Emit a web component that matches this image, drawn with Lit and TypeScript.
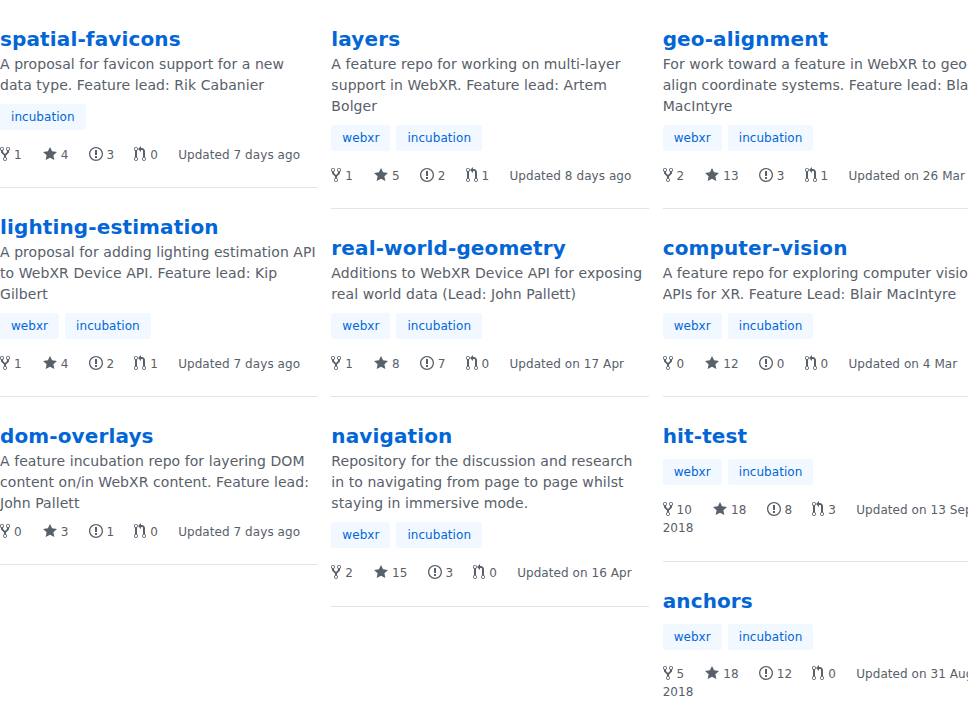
import { LitElement, css, html, svg } from 'lit';
import { customElement } from 'lit/decorators.js';

interface Repo {
  name: string;
  desc?: string;
  topics: string[];
  forks: number;
  stars: number;
  issues: number;
  prs: number;
  updated: string;
}

const W = ['webxr', 'incubation'];

const COLUMNS: Repo[][] = [
  [
    { name: 'spatial-favicons', desc: 'A proposal for favicon support for a new data type. Feature lead: Rik Cabanier', topics: ['incubation'], forks: 1, stars: 4, issues: 3, prs: 0, updated: 'Updated 7 days ago' },
    { name: 'lighting-estimation', desc: 'A proposal for adding lighting estimation API to WebXR Device API. Feature lead: Kip Gilbert', topics: W, forks: 1, stars: 4, issues: 2, prs: 1, updated: 'Updated 7 days ago' },
    { name: 'dom-overlays', desc: 'A feature incubation repo for layering DOM content on/in WebXR content. Feature lead: John Pallett', topics: [], forks: 0, stars: 3, issues: 1, prs: 0, updated: 'Updated 7 days ago' },
  ],
  [
    { name: 'layers', desc: 'A feature repo for working on multi-layer support in WebXR. Feature lead: Artem Bolger', topics: W, forks: 1, stars: 5, issues: 2, prs: 1, updated: 'Updated 8 days ago' },
    { name: 'real-world-geometry', desc: 'Additions to WebXR Device API for exposing real world data (Lead: John Pallett)', topics: W, forks: 1, stars: 8, issues: 7, prs: 0, updated: 'Updated on 17 Apr' },
    { name: 'navigation', desc: 'Repository for the discussion and research in to navigating from page to page whilst staying in immersive mode.', topics: W, forks: 2, stars: 15, issues: 3, prs: 0, updated: 'Updated on 16 Apr' },
  ],
  [
    { name: 'geo-alignment', desc: 'For work toward a feature in WebXR to geo-align coordinate systems. Feature lead: Blair MacIntyre', topics: W, forks: 2, stars: 13, issues: 3, prs: 1, updated: 'Updated on 26 Mar' },
    { name: 'computer-vision', desc: 'A feature repo for exploring computer vision APIs for XR. Feature Lead: Blair MacIntyre', topics: W, forks: 0, stars: 12, issues: 0, prs: 0, updated: 'Updated on 4 Mar' },
    { name: 'hit-test', topics: W, forks: 10, stars: 18, issues: 8, prs: 3, updated: 'Updated on 13 Sep 2018' },
    { name: 'anchors', topics: W, forks: 5, stars: 18, issues: 12, prs: 0, updated: 'Updated on 31 Aug 2018' },
  ],
];

const FORK = svg`<path d="M8 1a1.993 1.993 0 0 0-1 3.72V6L5 8 3 6V4.72A1.993 1.993 0 0 0 2 1a1.993 1.993 0 0 0-1 3.72V6.5l3 3v1.78A1.993 1.993 0 0 0 5 15a1.993 1.993 0 0 0 1-3.72V9.5l3-3V4.72A1.993 1.993 0 0 0 8 1zM2 4.2C1.34 4.2.8 3.65.8 3c0-.65.55-1.2 1.2-1.2.65 0 1.2.55 1.2 1.2 0 .65-.55 1.2-1.2 1.2zm3 10c-.66 0-1.2-.55-1.2-1.2 0-.65.55-1.2 1.2-1.2.65 0 1.2.55 1.2 1.2 0 .65-.55 1.2-1.2 1.2zm3-10c-.66 0-1.2-.55-1.2-1.2 0-.65.55-1.2 1.2-1.2.65 0 1.2.55 1.2 1.2 0 .65-.55 1.2-1.2 1.2z"/>`;
const STAR = svg`<path d="M14 6l-4.9-.64L7 1 4.9 5.36 0 6l3.6 3.26L2.67 14 7 11.67 11.33 14l-.93-4.74L14 6z"/>`;
const ISSUE = svg`<path d="M7 2.3c3.14 0 5.7 2.56 5.7 5.7s-2.56 5.7-5.7 5.7A5.71 5.71 0 0 1 1.3 8c0-3.14 2.56-5.7 5.7-5.7zM7 1C3.14 1 0 4.14 0 8s3.14 7 7 7 7-3.14 7-7-3.14-7-7-7zm1 3H6v5h2V4zm0 6H6v2h2v-2z"/>`;
const PR = svg`<path d="M11 11.28V5c-.03-.78-.34-1.47-.94-2.06C9.46 2.35 8.78 2.03 8 2H7V0L4 3l3 3V4h1c.27.02.48.11.69.31.21.2.3.42.31.69v6.28A1.993 1.993 0 0 0 10 15a1.993 1.993 0 0 0 1-3.72zm-1 2.92c-.66 0-1.2-.55-1.2-1.2 0-.65.55-1.2 1.2-1.2.65 0 1.2.55 1.2 1.2 0 .65-.55 1.2-1.2 1.2zM4 3c0-1.11-.89-2-2-2a1.993 1.993 0 0 0-1 3.72v6.56A1.993 1.993 0 0 0 2 15a1.993 1.993 0 0 0 1-3.72V4.72c.59-.34 1-.98 1-1.72zm-.8 10c0 .66-.55 1.2-1.2 1.2-.65 0-1.2-.55-1.2-1.2 0-.65.55-1.2 1.2-1.2.65 0 1.2.55 1.2 1.2zM2 4.2C1.34 4.2.8 3.65.8 3c0-.65.55-1.2 1.2-1.2.65 0 1.2.55 1.2 1.2 0 .65-.55 1.2-1.2 1.2z"/>`;

const icon = (w: number, body: unknown) =>
  html`<svg class="octicon" viewBox="0 0 ${w} 16" width=${w} height="16" aria-hidden="true">${body}</svg>`;

@customElement('app-root')
export class AppRoot extends LitElement {
  static get styles() {
    return css`
      :host {
        display: block;
        height: 725px;
        overflow: hidden;
        background: #fff;
        font-family: 'DejaVu Sans', sans-serif;
        color: #586069;
      }

      .columns {
        display: flex;
        width: 1000px;
        gap: 13.33px;
      }

      .column {
        flex: 0 0 318px;
        min-width: 0;
      }

      .repo {
        padding: 24px 0 23px;
        border-bottom: 1px solid #e1e4e8;
      }

      .repo__name {
        margin: 0;
        font-size: 20px;
        line-height: 30px;
        font-weight: 700;
        letter-spacing: 0.13px;
        color: #0366d6;
      }

      .repo__desc {
        margin: 0 0 8px;
        font-size: 14px;
        line-height: 21px;
        letter-spacing: 0.065px;
      }

      .topics {
        display: flex;
        gap: 6px;
        margin-top: 8px;
        margin-bottom: 14.8px;
      }

      .repo__desc + .topics {
        margin-top: 0;
      }

      .topic {
        padding: 4.15px 11px 3.85px;
        font-size: 12px;
        line-height: 18px;
        letter-spacing: 0.05px;
        border-radius: 3px;
        color: #0366d6;
        background: #f1f8ff;
      }

      .meta {
        padding-top: 1px;
        font-size: 12px;
        line-height: 18px;
        letter-spacing: 0.066px;
      }

      .topics + .meta {
        margin-bottom: 0.4px;
      }

      .meta__item {
        margin-right: 16.3px;
      }

      .meta__item--fork {
        margin-right: 17.3px;
      }

      .octicon {
        fill: #586069;
        vertical-align: text-bottom;
      }
    `;
  }

  private renderRepo(r: Repo) {
    return html`
      <div class="repo">
        <h3 class="repo__name">${r.name}</h3>
        ${r.desc ? html`<p class="repo__desc">${r.desc}</p>` : ''}
        ${r.topics.length
          ? html`<div class="topics">${r.topics.map((t) => html`<span class="topic">${t}</span>`)}</div>`
          : ''}
        <div class="meta">
          <span class="meta__item meta__item--fork">${icon(10, FORK)} ${r.forks}</span>
          <span class="meta__item">${icon(14, STAR)} ${r.stars}</span>
          <span class="meta__item">${icon(14, ISSUE)} ${r.issues}</span>
          <span class="meta__item">${icon(12, PR)} ${r.prs}</span>
          <span>${r.updated}</span>
        </div>
      </div>
    `;
  }

  render() {
    return html`
      <div class="columns">
        ${COLUMNS.map((col) => html`<div class="column">${col.map((r) => this.renderRepo(r))}</div>`)}
      </div>
    `;
  }
}
